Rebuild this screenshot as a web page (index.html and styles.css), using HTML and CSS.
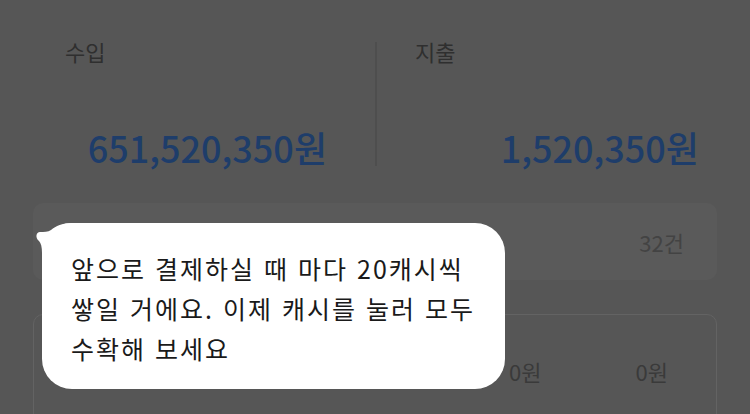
FILE: index.html
```html
<!DOCTYPE html>
<html lang="ko">
<head>
<meta charset="utf-8">
<link rel="stylesheet" href="styles.css">
</head>
<body>
<div class="page">
  <div class="summary">
    <div class="col col-in">
      <div class="label">수입</div>
      <div class="amount">651,520,350원</div>
    </div>
    <div class="col col-out">
      <div class="label">지출</div>
      <div class="amount">1,520,350원</div>
    </div>
  </div>
  <div class="count-card">
    <span class="count">32건</span>
  </div>
  <div class="table-card">
    <div class="vals">
      <span class="val">0원</span>
      <span class="val">0원</span>
    </div>
  </div>
  <div class="bubble">
    <svg class="ear" width="40" height="40" viewBox="-10 -2 40 40">
      <path d="M0 30 C 0 24, -1 20, -3 18 C -7 15, -6 9, -2 9 C 2 9, 6 9, 9 7 C 14 3, 20 0, 30 0 L 30 30 Z" fill="#ffffff"/>
    </svg>
    <p class="msg">앞으로 결제하실 때 마다 20캐시씩<br>쌓일 거에요. 이제 캐시를 눌러 모두<br>수확해 보세요</p>
  </div>
</div>
</body>
</html>
```

FILE: styles.css
```css
html, body {
  margin: 0;
  padding: 0;
}
body {
  background: #565656;
  font-family: "Noto Sans CJK KR", "Noto Sans", sans-serif;
  width: 750px;
  height: 414px;
  overflow: hidden;
}
.page {
  position: relative;
  height: 414px;
  overflow: hidden;
  padding: 42px 33px 0 33px;
  box-sizing: border-box;
}
.summary {
  display: grid;
  grid-template-columns: 342px 342px;
  height: 124px;
}
.col {
  display: flex;
  flex-direction: column;
  justify-content: space-between;
}
.col-out {
  border-left: 2px solid #4e4e4e;
}
.label {
  font-size: 22px;
  line-height: 22px;
  color: #2f2f2f;
  margin-top: -2px;
}
.col-in .label { padding-left: 32px; }
.col-out .label { padding-left: 38px; }
.amount {
  font-size: 36px;
  line-height: 40px;
  font-weight: 500;
  color: #1e3d6a;
  text-align: right;
  margin-bottom: -1px;
}
.col-in .amount { padding-right: 48px; }
.col-out .amount { padding-right: 18px; }
.count-card {
  margin-top: 37px;
  height: 77px;
  background: #5a5a5a;
  border-radius: 10px;
  display: flex;
  align-items: center;
  justify-content: flex-end;
  padding-right: 33px;
}
.count {
  font-size: 22px;
  color: #434343;
}
.table-card {
  margin-top: 34px;
  height: 140px;
  border: 1px solid #636363;
  border-radius: 10px;
  box-sizing: border-box;
}
.vals {
  display: flex;
  justify-content: flex-end;
  gap: 94px;
  padding-top: 40px;
  padding-right: 48px;
}
.val {
  font-size: 22px;
  line-height: 32px;
  color: #3a3a3a;
}
.bubble {
  position: absolute;
  left: 42px;
  top: 223px;
  width: 463px;
  height: 166px;
  background: #ffffff;
  border-radius: 30px;
  box-sizing: border-box;
  padding: 25px 0 0 29px;
}
.ear {
  position: absolute;
  left: -10px;
  top: -2px;
}
.msg {
  position: relative;
  margin: 0;
  font-size: 25px;
  line-height: 40px;
  letter-spacing: 2px;
  color: #1a1a1a;
}
```
